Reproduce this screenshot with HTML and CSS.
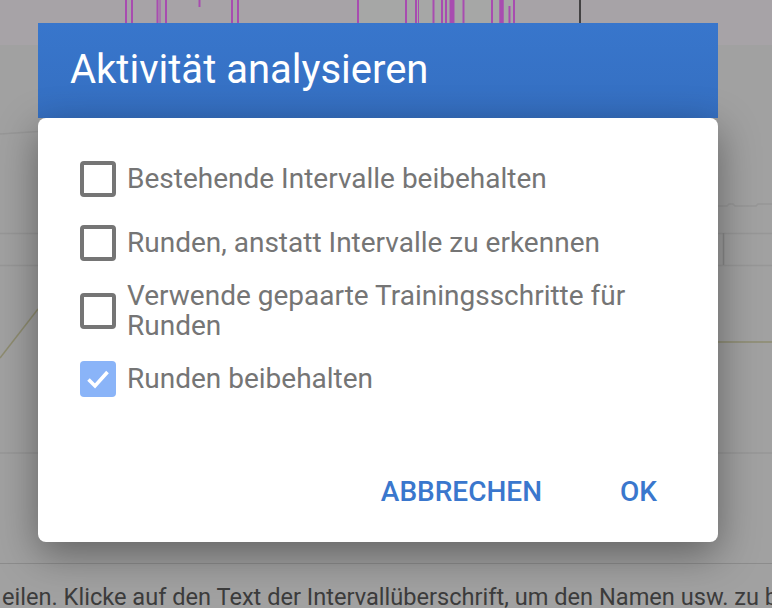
FILE: index.html
```html
<!DOCTYPE html>
<html lang="de">
<head>
    <meta charset="UTF-8">
    <title>Aktivität analysieren</title>
    <link rel="stylesheet" href="styles.css">
</head>
<body>

<div class="page">
    <div class="strip">
        <svg width="772" height="45" viewBox="0 0 772 45">
            <rect x="358" y="0" width="157" height="45" fill="#a6a7a6"/>
            <g stroke="#a84cb0" stroke-width="2">
                <line x1="126" y1="0" x2="126" y2="45"/>
                <line x1="132" y1="0" x2="132" y2="45"/>
                <line x1="157.5" y1="0" x2="157.5" y2="45"/>
                <line x1="160" y1="0" x2="160" y2="45" stroke-width="1"/>
                <line x1="166" y1="0" x2="166" y2="45"/>
                <line x1="199.5" y1="0" x2="199.5" y2="7"/>
                <line x1="232" y1="0" x2="232" y2="45"/>
                <line x1="238" y1="0" x2="238" y2="45"/>
                <line x1="358" y1="0" x2="358" y2="45"/>
                <line x1="406" y1="0" x2="406" y2="45"/>
                <line x1="416" y1="0" x2="416" y2="45"/>
                <line x1="418.5" y1="0" x2="418.5" y2="45" stroke-width="1"/>
                <line x1="433.5" y1="0" x2="433.5" y2="45"/>
                <line x1="442" y1="0" x2="442" y2="45"/>
                <line x1="446" y1="0" x2="446" y2="45"/>
                <line x1="452" y1="0" x2="452" y2="45" stroke-width="5"/>
                <line x1="463.5" y1="0" x2="463.5" y2="45"/>
                <line x1="492" y1="0" x2="492" y2="45"/>
                <line x1="501.5" y1="0" x2="501.5" y2="45" stroke-width="4.5"/>
                <line x1="509.5" y1="6" x2="509.5" y2="45"/>
                <line x1="514" y1="0" x2="514" y2="45"/>
            </g>
            <line x1="580" y1="0" x2="580" y2="45" stroke="#222" stroke-width="1.5"/>
        </svg>
    </div>

    <div class="plot">
        <svg width="772" height="518" viewBox="0 45 772 518">
            <g stroke="#979797" stroke-width="1.5" fill="none">
                <polyline points="0,134 38,131.5"/>
                <polyline points="718,206 727,206 729,204 733,204 735,206 756,206 758,204 772,204"/>
                <line x1="0" y1="233.5" x2="772" y2="233.5"/>
                <line x1="0" y1="265.5" x2="772" y2="265.5"/>
                <line x1="0" y1="453" x2="772" y2="453"/>
            </g>
            <line x1="723.5" y1="233" x2="723.5" y2="265" stroke="#8a8a8a" stroke-width="1.5"/>
            <g stroke="#8e8c70" stroke-width="1.5" fill="none">
                <line x1="0" y1="358" x2="38" y2="309"/>
                <line x1="718" y1="342" x2="772" y2="342"/>
            </g>
        </svg>
    </div>

    <div class="hint">eilen. Klicke auf den Text der Intervallüberschrift, um den Namen usw. zu bearbeiten.</div>
</div>

<div class="dialog">
    <div class="dialog-head">
        <h2>Aktivität analysieren</h2>
    </div>
    <div class="dialog-body">
        <div class="options">
            <label class="option"><span class="box"></span><span>Bestehende Intervalle beibehalten</span></label>
            <label class="option"><span class="box"></span><span>Runden, anstatt Intervalle zu erkennen</span></label>
            <label class="option"><span class="box"></span><span>Verwende gepaarte Trainingsschritte für Runden</span></label>
            <label class="option">
                <span class="box checked">
                    <svg width="36" height="36" viewBox="0 0 36 36"><path d="M8.5 18.5 L15 25 L27.5 11" fill="none" stroke="#fff" stroke-width="3.6"/></svg>
                </span>
                <span>Runden beibehalten</span>
            </label>
        </div>
        <div class="actions">
            <button class="btn">ABBRECHEN</button>
            <button class="btn">OK</button>
        </div>
    </div>
</div>

</body>
</html>
```

FILE: styles.css
```css
* { box-sizing: border-box; }
html, body { margin: 0; }
body {
    font-family: Roboto, "Liberation Sans", sans-serif;
    width: 772px;
    height: 608px;
    overflow: hidden;
    position: relative;
    background: #a1a1a1;
}
svg { display: block; }

.page { display: flex; flex-direction: column; height: 608px; }
.strip { height: 45px; background: #a7a3a7; }
.plot { height: 518px; }
.hint {
    border-top: 1px solid #8c8c8c;
    padding: 19px 0 0 2px;
    font-size: 23.6px;
    line-height: 28px;
    color: #3c3c3c;
    white-space: nowrap;
    overflow: hidden;
}

.dialog {
    position: absolute;
    left: 38px;
    top: 23px;
    width: 680px;
}
.dialog-head {
    background: linear-gradient(#3876cc, #356fc1);
    padding: 23px 32px 24px;
}
.dialog-head h2 {
    margin: 0;
    font-size: 40px;
    line-height: 48px;
    font-weight: 400;
    color: #fff;
}
.dialog-body {
    background: #fff;
    border-radius: 8px;
    padding: 35px 41px 26px 42px;
    box-shadow: 0 12px 40px rgba(0, 0, 0, 0.4);
}

.options { display: flex; flex-direction: column; gap: 12px; }
.option {
    display: flex;
    align-items: center;
    gap: 11px;
    min-height: 52px;
    font-size: 28px;
    line-height: 30px;
    color: #757575;
}
.box {
    flex: none;
    width: 36px;
    height: 36px;
    border: 4px solid #757575;
    border-radius: 4px;
}
.box.checked { border: none; background: #8ab4f8; }

.actions {
    display: flex;
    justify-content: flex-end;
    gap: 38px;
    margin-top: 63px;
}
.btn {
    background: none;
    border: none;
    padding: 0 20px;
    height: 48px;
    font: 500 28px/48px Roboto, "Liberation Sans", sans-serif;
    color: #3a77cd;
    cursor: pointer;
}
```
